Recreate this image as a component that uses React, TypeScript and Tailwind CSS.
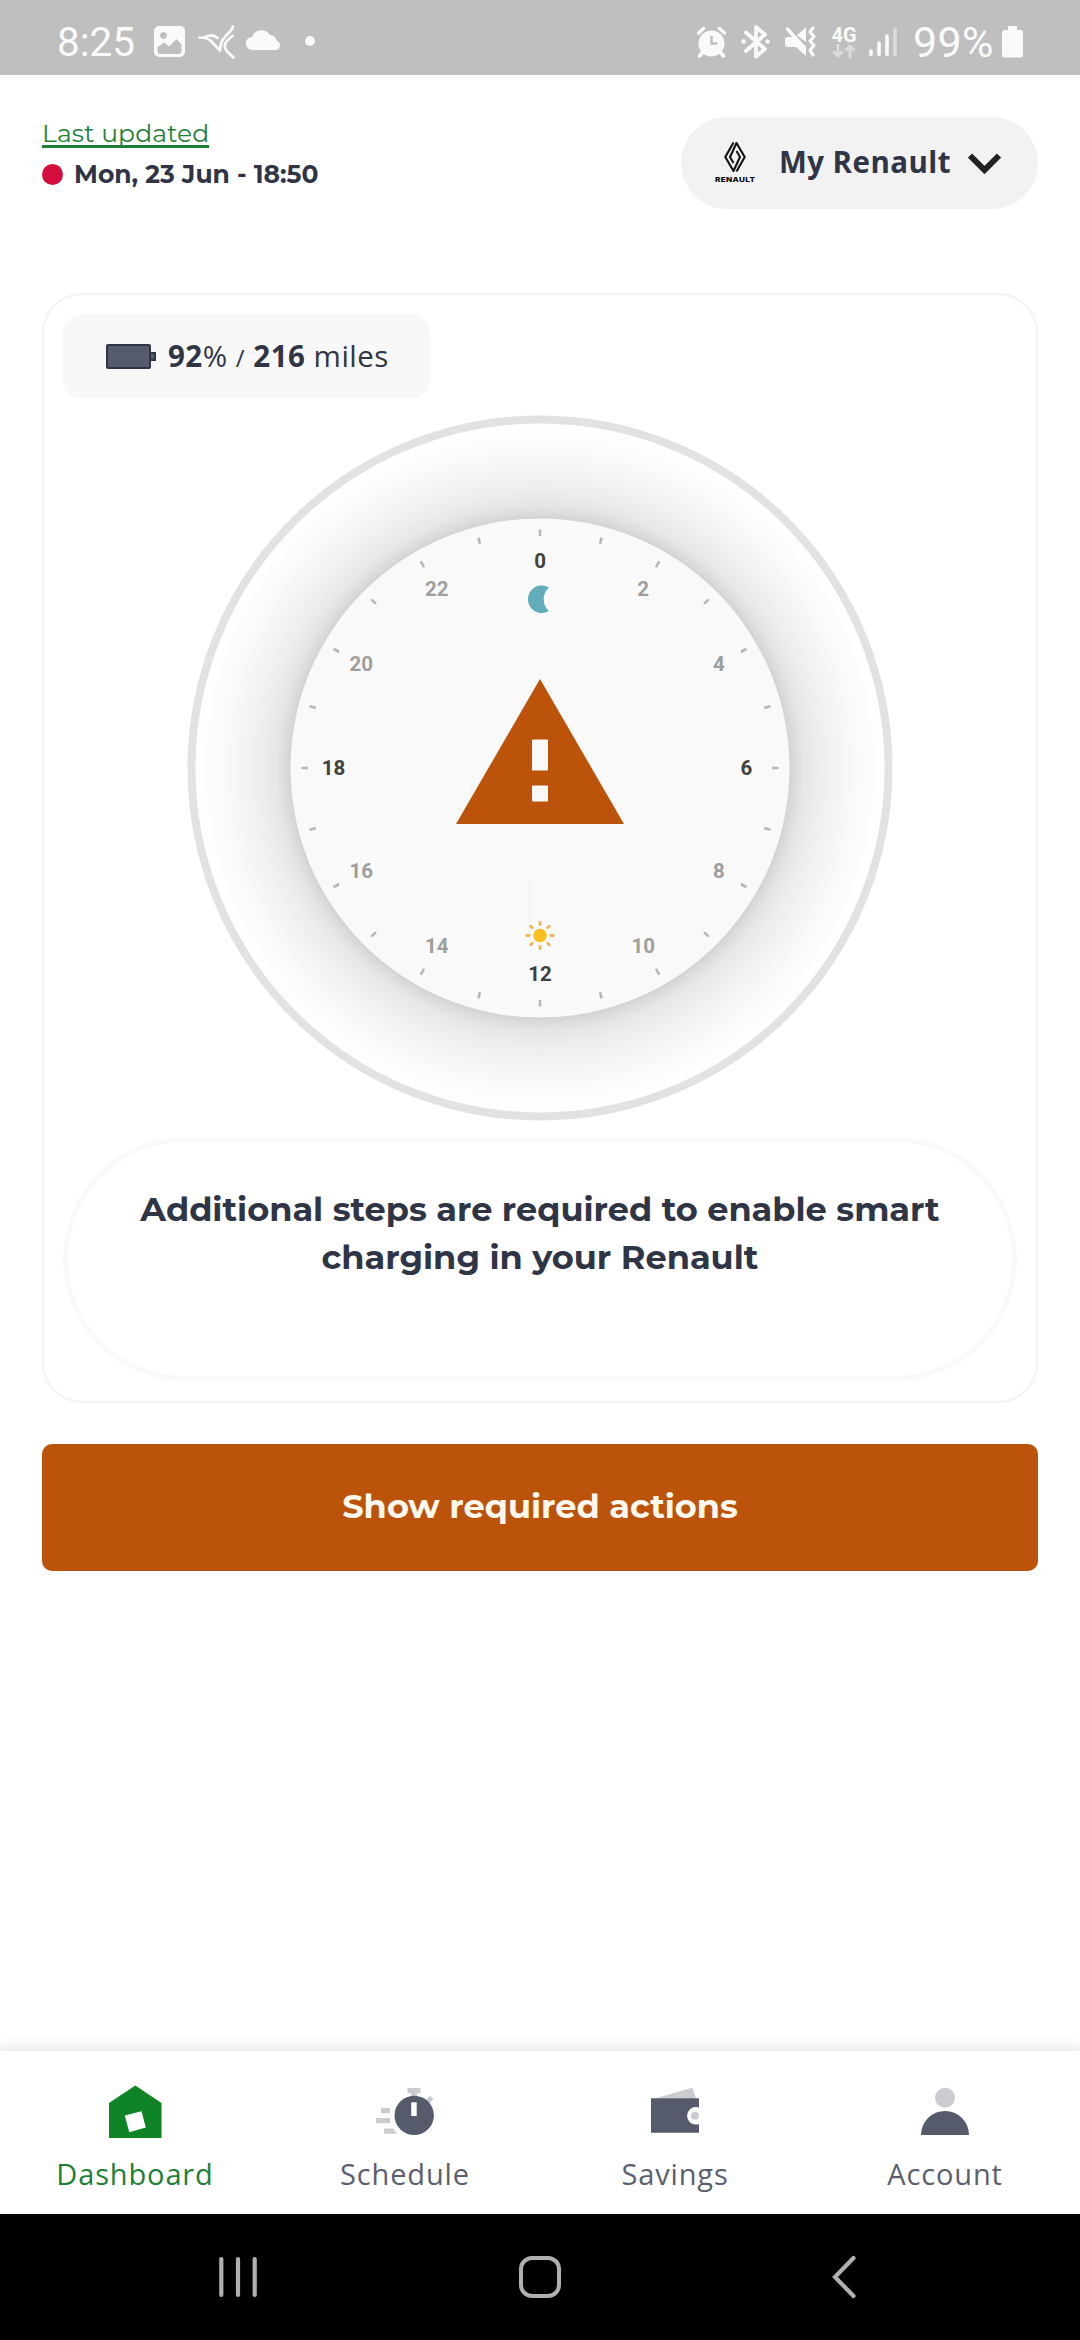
const dark = "#303546";

const montserrat = "font-['Montserrat',Inter,sans-serif]";

const hours = [0, 2, 4, 6, 8, 10, 12, 14, 16, 18, 20, 22];
const ticks = Array.from({ length: 24 }, (_, i) => i * 15);

const navItems = [
  { label: "Dashboard", icon: <HouseIcon />, active: true },
  { label: "Schedule", icon: <StopwatchIcon />, active: false },
  { label: "Savings", icon: <WalletIcon />, active: false },
  { label: "Account", icon: <PersonIcon />, active: false },
];

function StatusBar() {
  return (
    <div className="h-[75px] bg-[#bfbfbf] flex items-center justify-between pt-[9px] pl-[57px] pr-[57px] text-[#fafafa] font-[Roboto,sans-serif]">
      <div className="flex items-center">
        <span className="w-[97px] text-[40.500px] leading-none">8:25</span>
        <svg width="170" height="36" viewBox="154 25 170 36" fill="currentColor">
          {/* gallery */}
          <path fillRule="evenodd" d="M159 27h21a5 5 0 0 1 5 5v21a5 5 0 0 1-5 5h-21a5 5 0 0 1-5-5V32a5 5 0 0 1 5-5zM157.500 48v4q0 3 3 3h18q3 0 3-3v-6.500l-5-5.500-7.500 7.500-4.500-4zM163.500 33a3.500 3.500 0 1 0 .01 0z" />
          {/* bird */}
          <g fill="none" stroke="currentColor" strokeWidth="2.800" strokeLinecap="round">
            <path d="M199.500 38.500q8 0 11.500 3.500l9 9.500" strokeWidth="2.600" />
            <path d="M205 38q8-3.500 12.500 1" />
            <path d="M233 27.500c-2 8-13 9-13 24" />
            <path d="M232.500 37c-8 6-10 10-5 16l6 5.500" />
          </g>
          {/* cloud */}
          <path d="M252.500 51a6.500 6.500 0 0 1-.5-13 10 10 0 0 1 18-2 7 7 0 0 1 6.500 5.500 5 5 0 0 1 0 9.500z" />
          <circle cx="310" cy="42" r="5" />
        </svg>
      </div>
      <div className="flex items-center">
        <svg width="131" height="36" viewBox="697 25 131 36" fill="none" stroke="currentColor">
          {/* alarm */}
          <circle cx="711.500" cy="44.500" r="13" fill="currentColor" stroke="none" />
          <path d="M698.500 34l5-4.500M724.500 34l-5-4.500M703 53l-3.500 4M720 53l3.500 4" strokeWidth="3.500" strokeLinecap="round" />
          <path d="M711.500 37v7.500h6" stroke="#bfbfbf" strokeWidth="2.500" />
          {/* bluetooth */}
          <path d="M746 33.500l19 16.500-9 7.500V28l9 7.500L746 52" strokeWidth="3.800" strokeLinejoin="round" strokeLinecap="round" />
          <path d="M743.500 42.500h.1M767.500 42.500h.1" strokeWidth="4.500" strokeLinecap="round" />
          {/* muted + vibrate */}
          <path d="M785 41q0-3 3-3h8L806 48v9l-10-9h-8q-3 0-3-3zM797 36.500l9-8.500v15z" fill="currentColor" stroke="none" />
          <path d="M787.500 30l17 19" strokeWidth="3.400" strokeLinecap="round" />
          <path d="M813 29l-3 4 4 4.500-4 4.500 4 4.500-4 4.500 3 5" strokeWidth="3.200" strokeLinecap="round" strokeLinejoin="round" />
        </svg>
        <div className="flex flex-col items-center w-[32px] mt-px">
          <span className="text-[20px] leading-[17px] font-bold">4G</span>
          <svg width="24" height="14" viewBox="0 0 24 14" fill="none" stroke="#dedede" strokeWidth="2.500">
            <path d="M6 0v12M1.500 7.500L6 12l4.500-4.500M18 14V2M13.500 6.500L18 2l4.500 4.500" />
          </svg>
        </div>
        <svg className="ml-[9px]" width="44" height="36" viewBox="869 25 44 36" stroke="currentColor" strokeWidth="3.600" strokeLinecap="round">
          <path d="M871 52v3.500M879 44v11.500M887 37v18.500" />
          <path d="M895 30v25.500" stroke="#dcdcdc" />
        </svg>
        <span className="w-[89px] text-[43px] leading-none tracking-[0.300px]">99%</span>
        <svg width="21" height="32" viewBox="0 0 21 32" fill="currentColor">
          <path d="M6 0h9v4h3q3 0 3 3v22q0 2.500-2.500 2.500h-16Q0 31.500 0 29V7q0-3 3-3h3z" />
        </svg>
      </div>
    </div>
  );
}

function RenaultLogo() {
  return (
    <div className="flex flex-col items-center w-[40px]">
      <svg width="22" height="30" viewBox="0 0 22 30" fill="none" stroke="#111" strokeWidth="2.100">
        <path d="M9.500 .5L1.300 15l8.200 14L16 15l-3.500-6" />
        <path d="M12.500 29.500L20.700 15 12.500 1 6 15l3.500 6" />
      </svg>
      <span className="mt-[5px] text-[6.500px] leading-[7px] font-extrabold tracking-[0.3px] text-black font-[Inter,sans-serif] scale-x-125">RENAULT</span>
    </div>
  );
}

function Header() {
  return (
    <div className="flex justify-between items-start pt-[42px]">
      <div className={montserrat}>
        <p className="text-[25px] leading-[32px] tracking-[0.150px] text-[#1f7f37]">
          <span className="border-b-[3px] border-[#1f7f37] inline-block leading-[33px] h-[31px] whitespace-nowrap">Last updated</span>
        </p>
        <div className="flex items-center gap-[11px] mt-[9px]">
          <span className="w-[21px] h-[21px] rounded-full bg-[#d30d3c]" />
          <span className="text-[25px] leading-[32px] font-bold text-[#303546] whitespace-nowrap">Mon, 23 Jun - 18:50</span>
        </div>
      </div>
      <button className="flex items-center w-[357px] h-[92px] rounded-full bg-[#f2f2f2] pl-[34px]">
        <RenaultLogo />
        <span className="ml-[24px] mb-[2px] w-[189px] text-left text-[29.500px] font-bold tracking-[0.450px] text-[#303546] whitespace-nowrap font-['Open_Sans',sans-serif]">
          My Renault
        </span>
        <svg width="33" height="21" viewBox="0 0 33 21" fill="none" stroke="#222" strokeWidth="6">
          <path d="M2 2.500l14.500 14.500L31 2.500" />
        </svg>
      </button>
    </div>
  );
}

function ChargeBadge() {
  return (
    <div className="flex items-center w-[367px] h-[85px] rounded-[20px] bg-[#f8f8f8] pl-[43px] text-[#303546] font-['Open_Sans',sans-serif]">
      <svg width="51" height="25" viewBox="0 0 51 25" fill="#565b6b" stroke={dark} strokeWidth="2">
        <rect x="1" y="1" width="43" height="23" rx="1" />
        <rect x="44" y="9" width="5" height="7" />
      </svg>
      <p className="ml-[11px] mb-px text-[29.500px] tracking-[0.500px] whitespace-nowrap">
        <b>92</b>% <span className="text-[24px]">/</span> <b>216</b> miles
      </p>
    </div>
  );
}

function ClockDial() {
  return (
    <svg className="mx-auto mt-[16px]" width="706" height="706" viewBox="-353 -353 706 706">
      <defs>
        <radialGradient id="dial-shade" cx="0" cy="0" r="345" gradientUnits="userSpaceOnUse">
          <stop offset="0.722" stopColor="#d2d2d2" />
          <stop offset="0.740" stopColor="#dcdcdc" />
          <stop offset="0.765" stopColor="#e6e6e6" />
          <stop offset="0.810" stopColor="#eeeeee" />
          <stop offset="0.880" stopColor="#f6f6f6" />
          <stop offset="0.950" stopColor="#fcfcfc" />
          <stop offset="1" stopColor="#ffffff" />
        </radialGradient>
      </defs>
      <circle r="348.500" fill="url(#dial-shade)" stroke="#e2e2e2" strokeWidth="8" />
      <circle r="249.500" fill="#f9f9f9" />

      {ticks.map((deg) => (
        <line key={deg} y1="-238.500" y2="-232" stroke="#b8b8b8" strokeWidth="2.600" transform={`rotate(${deg})`} />
      ))}

      {hours.map((h) => {
        const angle = (h * 15 * Math.PI) / 180;
        return (
          <text
            key={h}
            x={206.5 * Math.sin(angle)}
            y={-206.5 * Math.cos(angle) + 6.5}
            textAnchor="middle"
            className="font-[Roboto,sans-serif] text-[20.500px] font-bold"
            fill={h % 6 === 0 ? "#404040" : "#9e9e9e"}
          >
            {h}
          </text>
        );
      })}

      {/* moon */}
      <path d="M9 -180.500A13.800 13.800 0 1 0 9 -157A15.600 15.600 0 0 1 9 -180.500Z" fill="#62adbb" />

      {/* warning */}
      <path d="M0 -89L84 56H-84Z" fill="#bc530a" />
      <rect x="-8" y="-28.500" width="16" height="31" rx="1" fill="#f9f9f9" />
      <rect x="-8" y="17.500" width="16" height="16" rx="1" fill="#f9f9f9" />

      {/* sun */}
      <line x1="-10.500" x2="-10.500" y1="110" y2="166" stroke="#fbeccb" />
      <circle cy="167.500" r="6.800" fill="#fdbf1e" />
      {[0, 45, 90, 135, 180, 225, 270, 315].map((deg) => (
        <line
          key={deg}
          y1="-10.800"
          y2="-13.200"
          stroke="#eab75a"
          strokeWidth="2.800"
          strokeLinecap="round"
          transform={`translate(0 167.500) rotate(${deg})`}
        />
      ))}
    </svg>
  );
}

function HouseIcon() {
  return (
    <svg width="54" height="54" viewBox="108 2085 54 54">
      <path d="M135.300 2085.500L161.500 2103v35H109v-35z" fill="#0e8427" />
      <path d="M124.800 2115.500l16.700-4.300 4.300 16.300-16.500 4.700z" fill="#fff" />
    </svg>
  );
}

function StopwatchIcon() {
  return (
    <svg width="60" height="54" viewBox="375 2085 60 54">
      <g fill="#cbccd0">
        <path d="M407.500 2088h13v5.300h-3.500v4h-6v-4h-3.500zM425 2101l5-5.500 3.500 3.500-4.500 5z" />
        <path d="M381 2108h9v5.200h-9zM376 2118h14v5.200h-14zM384 2128.500h9l4 5.200h-13z" />
      </g>
      <circle cx="414.200" cy="2115.400" r="19.700" fill="#565b6b" />
      <path d="M411.200 2102.300h5.500v13.700h-5.500z" fill="#fff" />
    </svg>
  );
}

function WalletIcon() {
  return (
    <svg width="54" height="54" viewBox="648 2085 54 54">
      <path d="M655 2098.500l36-10.500q1.500-.3 2 1.200l3 9.300z" fill="#cbccd0" />
      <path d="M651 2098.300h48v9.200a8.800 8.800 0 1 0 0 16.500v8.700h-48z" fill="#565b6b" />
      <circle cx="695" cy="2115.700" r="3.900" fill="#cbccd0" />
    </svg>
  );
}

function PersonIcon() {
  return (
    <svg width="54" height="54" viewBox="918 2085 54 54">
      <circle cx="945" cy="2097.800" r="10" fill="#cbccd0" />
      <path d="M921 2135a24 24 0 0 1 48 0z" fill="#565b6b" />
    </svg>
  );
}

function BottomNav() {
  return (
    <nav className="grid grid-cols-4 h-[163px] bg-white shadow-[0_-3px_14px_rgba(48,53,70,0.14)] font-['Open_Sans',sans-serif]">
      {navItems.map((item) => (
        <button key={item.label} className="flex flex-col items-center justify-start pt-[34px]">
          {item.icon}
          <span className={`mt-[15px] text-[29px] leading-[40px] tracking-[0.850px] ${item.active ? "text-[#1f7f37]" : "text-[#5c606e]"}`}>
            {item.label}
          </span>
        </button>
      ))}
    </nav>
  );
}

function SystemBar() {
  return (
    <div className="flex items-center justify-between h-[126px] bg-black px-[217px]">
      <svg width="42" height="42" viewBox="0 0 42 42" stroke="#b0b0b0" strokeWidth="4.200" strokeLinecap="round">
        <path d="M4.300 3v36M21 3v36M37.700 3v36" />
      </svg>
      <span className="w-[42px] h-[42px] rounded-[13px] border-4 border-[#b0b0b0]" />
      <svg width="42" height="44" viewBox="0 0 42 44" fill="none" stroke="#b0b0b0" strokeWidth="4.200" strokeLinecap="round">
        <path d="M32.500 3L14 22l18.500 19" />
      </svg>
    </div>
  );
}

export default function App() {
  return (
    <div className="flex flex-col w-[1080px] h-[2340px] bg-white overflow-hidden">
      <StatusBar />

      <main className="flex-1 flex flex-col px-[42px]">
        <Header />

        {/* Card */}
        <section className="mt-[84px] h-[1110px] border-2 border-[#f3f3f3] rounded-[40px] px-[19px] pt-[19px]">
          <ChargeBadge />
          <ClockDial />
          <div className={`mt-[16px] h-[244px] rounded-full border-[5px] border-[#f9f9f9] pt-[43px] text-center text-[33.600px] leading-[48px] font-bold text-[#303546] ${montserrat}`}>
            <p className="whitespace-nowrap">Additional steps are required to enable smart</p>
            <p className="whitespace-nowrap">charging in your Renault</p>
          </div>
        </section>

        <button className={`mt-[41px] h-[127px] pb-[2px] rounded-[10px] bg-[#bc530a] text-[33.600px] font-bold text-[#fff8ee] ${montserrat}`}>
          Show required actions
        </button>
      </main>

      <BottomNav />
      <SystemBar />
    </div>
  );
}
